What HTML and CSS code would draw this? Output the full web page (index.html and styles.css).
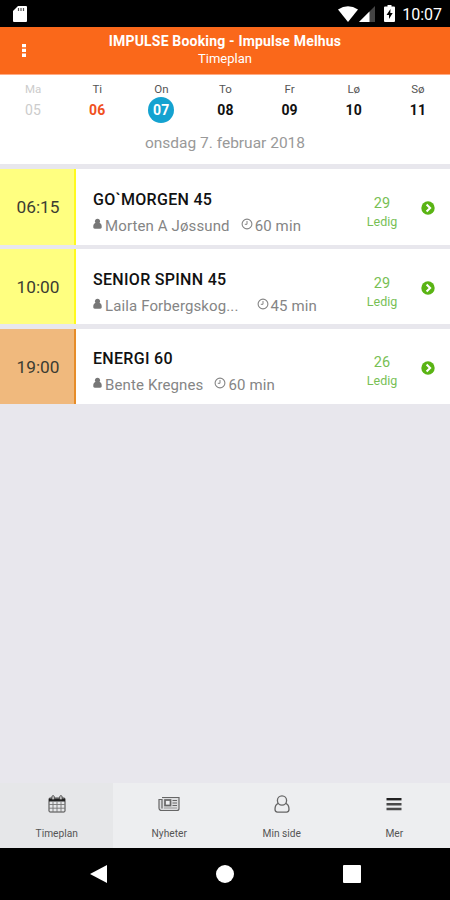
FILE: index.html
```html
<!DOCTYPE html>
<html lang="no">
<head>
  <meta charset="UTF-8" />
  <meta name="viewport" content="width=device-width, initial-scale=1.0">
  <title>IMPULSE Booking</title>
  <link rel="stylesheet" href="styles.css">
</head>
<body>
  <svg width="0" height="0" class="defs">
    <symbol id="person" viewBox="0 0 10 12">
      <circle cx="5" cy="3" r="2.8" />
      <path d="M2.3 5h5.4c1.5.8 2 2.200 2 4.400 0 1.300-.6 1.800-1.700 1.800H2c-1.100 0-1.700-.5-1.700-1.800 0-2.200.5-3.600 2-4.400z" />
    </symbol>
    <symbol id="clock" viewBox="0 0 12 12">
      <circle cx="6" cy="6" r="4.9" fill="none" stroke="currentColor" stroke-width="1.1" />
      <path d="M6 3v3.3H3.800" fill="none" stroke="currentColor" />
    </symbol>
    <symbol id="arrow" viewBox="0 0 14 14">
      <circle cx="7" cy="7" r="6.7" />
      <path d="M5.6 3.5 9.1 7l-3.5 3.5" fill="none" stroke="#fff" stroke-width="2.1" />
    </symbol>
  </svg>

  <div class="statusbar">
    <svg width="14" height="16" viewBox="0 0 14 16">
      <path d="M5 0h8a1 1 0 0 1 1 1v14a1 1 0 0 1-1 1H1a1 1 0 0 1-1-1V5z" fill="#fff" />
      <path d="M5.5 2v3M8 2v3M10.5 2v3" stroke="#555" stroke-width="1.2" />
    </svg>
    <div class="status-icons">
      <svg width="20" height="16" viewBox="0 0 20 16"><path d="M0 3.5Q10-3 20 3.5L10 16z" fill="#fff" /></svg>
      <svg class="signal" width="16" height="16" viewBox="0 0 16 16">
        <path d="M16 0v16H0z" fill="#444" />
        <path d="M10.5 5.5V16H0z" fill="#fff" />
      </svg>
      <svg class="battery" width="11" height="17" viewBox="0 0 11 17">
        <path d="M3.5 0h4v1.5H10a1 1 0 0 1 1 1V16a1 1 0 0 1-1 1H1a1 1 0 0 1-1-1V2.5a1 1 0 0 1 1-1h2.5z" fill="#fff" />
        <path d="M6.5 4 2.5 10H5v4l3.7-6H6.3z" fill="#000" />
      </svg>
      <span class="clock-text">10:07</span>
    </div>
  </div>

  <header class="header">
    <svg class="menu-dots" width="4" height="13" viewBox="0 0 4 13">
      <path d="M0 0h4v3.3H0zM0 4.8h4v3.3H0zM0 9.6h4v3.3H0z" fill="#fff" />
    </svg>
    <h1>IMPULSE Booking - Impulse Melhus</h1>
    <p>Timeplan</p>
  </header>

  <section class="calendar">
    <div class="days">
      <div class="day past"><span>Ma</span><b>05</b></div>
      <div class="day today"><span>Ti</span><b>06</b></div>
      <div class="day selected"><span>On</span><b>07</b></div>
      <div class="day"><span>To</span><b>08</b></div>
      <div class="day"><span>Fr</span><b>09</b></div>
      <div class="day"><span>Lø</span><b>10</b></div>
      <div class="day"><span>Sø</span><b>11</b></div>
    </div>
    <p class="date">onsdag 7. februar 2018</p>
  </section>

  <main class="classes">
    <div class="class-row">
      <div class="time yellow">06:15</div>
      <div class="info">
        <h2>GO`MORGEN 45</h2>
        <div class="meta">
          <svg class="person"><use href="#person" /></svg><span class="trainer">Morten A Jøssund</span>
          <svg class="clock"><use href="#clock" /></svg><span>60 min</span>
        </div>
      </div>
      <div class="free"><span>29</span><small>Ledig</small></div>
      <svg class="arrow"><use href="#arrow" /></svg>
    </div>
    <div class="class-row">
      <div class="time yellow">10:00</div>
      <div class="info">
        <h2>SENIOR SPINN 45</h2>
        <div class="meta">
          <svg class="person"><use href="#person" /></svg><span class="trainer cut">Laila Forbergskog...</span>
          <svg class="clock"><use href="#clock" /></svg><span>45 min</span>
        </div>
      </div>
      <div class="free"><span>29</span><small>Ledig</small></div>
      <svg class="arrow"><use href="#arrow" /></svg>
    </div>
    <div class="class-row">
      <div class="time orange">19:00</div>
      <div class="info">
        <h2>ENERGI 60</h2>
        <div class="meta">
          <svg class="person"><use href="#person" /></svg><span class="trainer">Bente Kregnes</span>
          <svg class="clock"><use href="#clock" /></svg><span>60 min</span>
        </div>
      </div>
      <div class="free"><span>26</span><small>Ledig</small></div>
      <svg class="arrow"><use href="#arrow" /></svg>
    </div>
  </main>

  <nav class="tabs">
    <div class="tab active">
      <svg width="18" height="18" viewBox="0 0 18 18" fill="none" stroke="#444">
        <rect x="1" y="3" width="16" height="14" rx="1" />
        <path d="M1 5h16" stroke="#222" stroke-width="3" />
        <path d="M1 9.5h16M1 13.2h16M5 6.5V17M9 6.5V17M13 6.5V17" stroke="#777" stroke-width=".9" />
        <rect x="4" y=".7" width="2.2" height="4" rx="1" fill="#eee" />
        <rect x="11.8" y=".7" width="2.2" height="4" rx="1" fill="#eee" />
      </svg>
      <span>Timeplan</span>
    </div>
    <div class="tab">
      <svg width="22" height="18" viewBox="0 0 22 18" fill="none" stroke="#666">
        <path d="M4 2.500h17v11a2 2 0 0 1-2 2H3.500A2.500 2.500 0 0 1 1 13V4.500h3v9" fill="#dcdddf" stroke-width="1.200" />
        <path d="M6 13h13" stroke="#999" />
        <rect x="7" y="5" width="5.500" height="5.500" fill="#edeef0" stroke-width="1.700" />
        <path d="M14.500 5.500H19M14.500 8H19M14.500 10.500H19" />
      </svg>
      <span>Nyheter</span>
    </div>
    <div class="tab">
      <svg width="18" height="18" viewBox="0 0 18 18" fill="none" stroke="#666" stroke-width="1.3">
        <circle cx="9" cy="5.500" r="4.600" />
        <path d="M5.300 8.300C3 9.100 2 11 2 14.300c0 1.900 1 2.800 2.400 2.800h9.200c1.400 0 2.400-.9 2.400-2.800 0-3.300-1-5.200-3.300-6" />
      </svg>
      <span>Min side</span>
    </div>
    <div class="tab">
      <svg width="16" height="18" viewBox="0 0 16 18" fill="none" stroke="#4a4a4a" stroke-width="2.4">
        <path d="M.5 4.200h15" stroke="#222" />
        <path d="M.5 9.200h15M.5 14h15" />
      </svg>
      <span>Mer</span>
    </div>
  </nav>

  <div class="navbar">
    <svg width="17" height="18" viewBox="0 0 17 18"><path d="M0 9 17 0v18z" fill="#fff" /></svg>
    <svg width="18" height="18" viewBox="0 0 18 18"><circle cx="9" cy="9" r="9" fill="#fff" /></svg>
    <svg width="18" height="18" viewBox="0 0 18 18"><rect width="18" height="18" rx="1" fill="#fff" /></svg>
  </div>
</body>
</html>
```
FILE: styles.css
```css
* {
  box-sizing: border-box;
}
body {
  margin: 0;
  height: 900px;
  display: flex;
  flex-direction: column;
  font-family: Roboto, sans-serif;
  background-color: #e8e7ed;
  overflow: hidden;
}
h1, h2, p {
  margin: 0;
}
svg {
  display: block;
  flex: none;
}
.defs {
  position: absolute;
}
.statusbar {
  height: 27px;
  padding: 0 8px 0 13px;
  display: flex;
  align-items: center;
  justify-content: space-between;
  background-color: #000;
  color: #fff;
}
.status-icons {
  display: flex;
  align-items: center;
}
.signal {
  margin-left: 1px;
}
.battery {
  margin: 0 7px 0 9px;
}
.clock-text {
  font-size: 16px;
  line-height: 27px;
  padding-top: 2px;
}
.header {
  position: relative;
  height: 47px;
  padding-top: 5px;
  background-color: #fa681a;
  color: #fff;
  text-align: center;
}
.header h1 {
  font-size: 14px;
  line-height: 18px;
  font-weight: 700;
  letter-spacing: 0.18px;
}
.header p {
  font-size: 13px;
  line-height: 18px;
}
.menu-dots {
  position: absolute;
  left: 22px;
  top: 17px;
}
.calendar {
  height: 90px;
  background-color: #fff;
  border-top: 1px solid #ffab84;
}
.days {
  display: grid;
  grid-template-columns: repeat(7, 1fr);
  padding: 7px 0 0 1px;
}
.day {
  display: flex;
  flex-direction: column;
  align-items: center;
  color: #111;
}
.day span {
  font-size: 11.5px;
  line-height: 15px;
  color: #555;
}
.day b {
  width: 26px;
  height: 26px;
  border-radius: 50%;
  font-size: 14px;
  line-height: 27px;
  text-align: center;
  letter-spacing: 0.2px;
}
.day.past b, .day.past span {
  color: #ccc;
  font-weight: 400;
}
.day.today b {
  color: #f0501e;
}
.day.selected b {
  background-color: #14a2d0;
  color: #fff;
}
.date {
  margin-top: 10px;
  font-size: 15.5px;
  line-height: 20px;
  text-align: center;
  color: #999;
}
.classes {
  flex: 1;
  display: flex;
  flex-direction: column;
  gap: 4.2px;
  padding-top: 5px;
}
.class-row {
  display: flex;
  align-items: center;
  height: 75.6px;
  background-color: #fff;
}
.time {
  width: 76px;
  height: 100%;
  display: flex;
  align-items: center;
  justify-content: center;
  padding: 1px 0 0 2px;
  font-size: 17.3px;
  color: #3c3c32;
}
.yellow {
  background-color: #ffff80;
  border-right: 2px solid #fffa1e;
}
.orange {
  background-color: #f0b97d;
  border-right: 2px solid #e68c28;
}
.info {
  flex: 1;
  padding: 12px 0 0 17px;
}
.info h2 {
  font-size: 16px;
  line-height: 22px;
  font-weight: 500;
  letter-spacing: 0.3px;
  color: #111;
}
.meta {
  display: flex;
  align-items: center;
  margin-top: 4px;
  font-size: 15px;
  line-height: 22px;
  letter-spacing: 0.12px;
  color: #858585;
  white-space: nowrap;
}
.trainer {
  margin-right: 11px;
}
.trainer.cut {
  margin-right: 18px;
}
.person {
  width: 9px;
  height: 12px;
  margin: 0 3px 4px 0;
  fill: #777;
}
.clock {
  width: 12px;
  height: 12px;
  margin: 0 2px 4px 0;
}
.free {
  width: 60px;
  display: flex;
  flex-direction: column;
  align-items: center;
  padding-top: 12px;
  color: #78bf55;
}
.free span {
  font-size: 14.5px;
  line-height: 18px;
}
.free small {
  font-size: 12.5px;
  line-height: 18px;
}
.arrow {
  width: 14px;
  height: 14px;
  margin: 3px 15px 0 9px;
  fill: #5ab414;
}
.tabs {
  display: grid;
  grid-template-columns: repeat(4, 1fr);
  height: 65px;
  background-color: #edeef0;
}
.tab {
  display: flex;
  flex-direction: column;
  align-items: center;
  padding: 12px 0 0 1px;
  font-size: 10.2px;
  color: #555;
}
.tab span {
  margin-top: 14px;
  line-height: 14px;
}
.active {
  background-color: #e6e7e9;
}
.navbar {
  height: 52px;
  display: flex;
  align-items: center;
  justify-content: space-between;
  padding: 0 89px 0 90px;
  background-color: #000;
}
```
